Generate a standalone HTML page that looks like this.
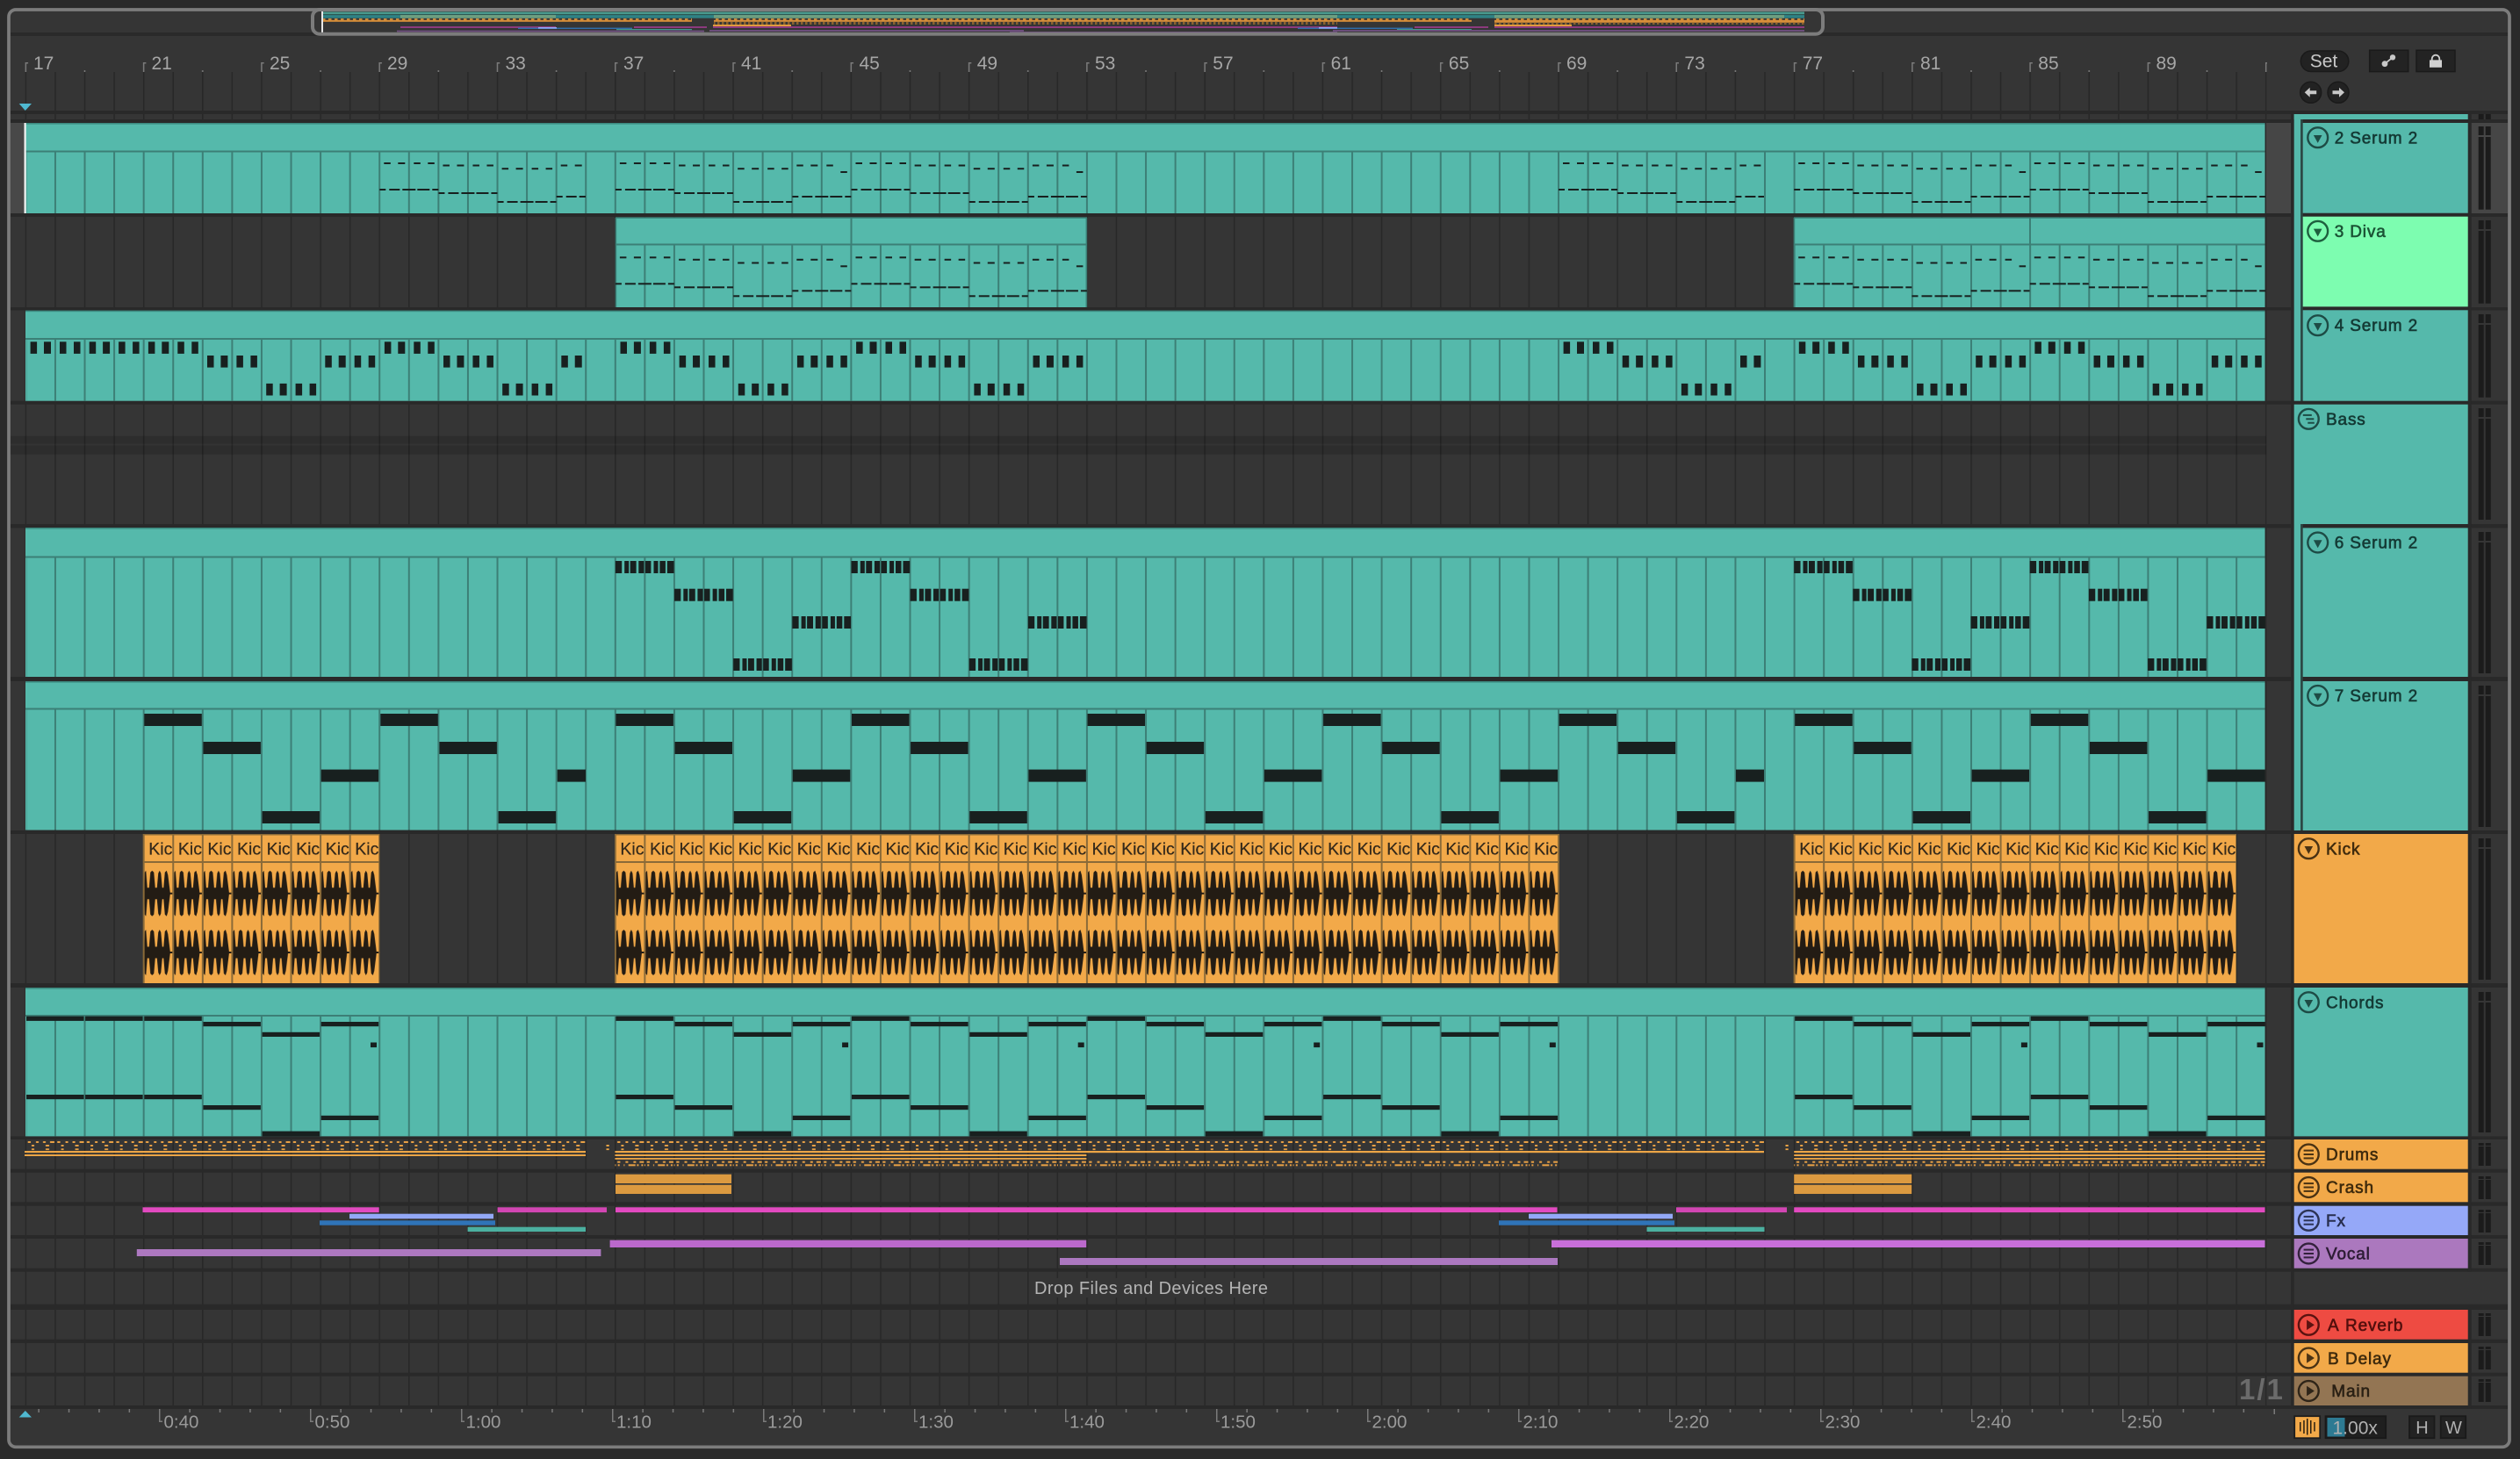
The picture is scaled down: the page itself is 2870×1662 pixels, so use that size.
<!DOCTYPE html>
<html><head><meta charset="utf-8"><title>Arrangement</title>
<style>
html,body{margin:0;padding:0;background:#2a2a2a;overflow:hidden}
svg{display:block}
text{font-family:"Liberation Sans",sans-serif}
.r{font-size:21px;fill:#a6a6a6}
.b{font-size:20.5px;fill:#9a9a9a}
.t{font-size:19px;letter-spacing:.85px;stroke-width:.6px}
.k{font-size:19.5px;fill:#33281a;stroke:#33281a;stroke-width:.2px}
</style></head><body>
<svg xmlns="http://www.w3.org/2000/svg" width="2870" height="1662" viewBox="0 0 2870 1662">
<defs>
<pattern id="pg" patternUnits="userSpaceOnUse" width="33.57" height="10" patternTransform="translate(28.6,0)"><rect width="1.6" height="10" fill="#282828"/></pattern>
<pattern id="pl" patternUnits="userSpaceOnUse" width="33.57" height="10" patternTransform="translate(28.4,0)"><rect width="2" height="10" fill="#3c7f76"/></pattern>
<pattern id="ps" patternUnits="userSpaceOnUse" width="33.57" height="10" patternTransform="translate(28.4,0)"><rect width="2" height="10" fill="#8a6a38"/></pattern>
<pattern id="pt" patternUnits="userSpaceOnUse" width="134.28" height="11" patternTransform="translate(28.6,71)"><rect width="1.5" height="11" fill="#7a7a7a"/><rect width="3.5" height="1.5" fill="#7a7a7a"/><rect x="67.14" y="9" width="1.5" height="2" fill="#7a7a7a"/></pattern>
<pattern id="pb" patternUnits="userSpaceOnUse" width="34.4" height="4" patternTransform="translate(43.4,1605)"><rect width="1.5" height="4" fill="#7a7a7a"/></pattern>
<pattern id="pm" patternUnits="userSpaceOnUse" width="172" height="15" patternTransform="translate(181,1605)"><rect width="1.5" height="15" fill="#7a7a7a"/><rect y="13.5" width="4" height="1.5" fill="#7a7a7a"/></pattern>
<path id="w" d="M.8-6.5 1.5-24 3-26 4.5-6.5H6.5L8-24 10-26 12-24 13.5-6.5H15.5L17-23 18.5-26 20-23 21.5-6.5H23L24.5-24 26.5-26 28-21 30-5 30.5-1H33.5V1H30.5L30 5 28 21 26.5 26 24.5 24 23 6.5H21.5L20 23 18.5 26 17 23 15.5 6.5H13.5L12 24 10 26 8 24 6.5 6.5H4.5L3 26 1.5 24 .8 6.5Z"/>
<pattern id="pk" patternUnits="userSpaceOnUse" width="33.57" height="170" patternTransform="translate(29,950)"><use href="#w" y="67.7" fill="#231c14"/><use href="#w" y="135" fill="#231c14"/></pattern>
<pattern id="pd1" patternUnits="userSpaceOnUse" width="33.57" height="14" patternTransform="translate(29,1298)"><g fill="#e8a045"><rect x="2.7" y="2" width="3.3" height="2"/><rect x="12" y="2" width="3" height="2"/><rect x="20" y="2" width="3" height="2"/><rect x="28" y="2" width="5" height="2"/><rect x="7" y="6" width="3" height="2"/><rect x="23" y="6" width="4" height="2"/><rect x="7" y="10.3" width="3" height="1.8"/><rect x="23" y="10.3" width="4" height="1.8"/></g></pattern>
<pattern id="pd2" patternUnits="userSpaceOnUse" width="33.57" height="8" patternTransform="translate(29,1322)"><g fill="#e8a045"><rect x="2.7" y=".7" width="3.3" height="2"/><rect x="12" y=".7" width="3" height="2"/><rect x="21" y=".7" width="3" height="2"/><rect x="28" y=".7" width="5" height="2"/><rect x="0" y="4.3" width="1" height="2"/><rect x="3.3" y="4.3" width="2" height="2"/><rect x="10" y="4.3" width="1" height="2"/><rect x="15.3" y="4.3" width="8" height="2"/><rect x="25" y="4.3" width="2" height="2"/><rect x="30" y="4.3" width="2" height="2"/></g></pattern>
<pattern id="po" patternUnits="userSpaceOnUse" width="7" height="2" patternTransform="translate(367,21)"><rect width="3.5" height="2" fill="#c98a3c"/></pattern>
<pattern id="po2" patternUnits="userSpaceOnUse" width="5" height="3" patternTransform="translate(367,25)"><rect width="2.5" height="3" fill="#8a6230"/></pattern>

<g id="d1" fill="#18201f"><rect x="5" width="7.5" height="2"/><rect x="21" width="8" height="2"/><rect x="39" width="7.5" height="2"/><rect x="55" width="7.5" height="2"/></g>
<g id="d2" fill="#18201f"><rect width="7" height="2"/><rect x="11" width="12" height="2"/><rect x="26" width="15" height="2"/><rect x="43" width="14" height="2"/><rect x="60" width="7" height="2"/></g>
<g id="t1">
<use href="#d1" y="185"/><use href="#d2" y="215"/>
<use href="#d1" x="67.14" y="187.5"/><use href="#d2" x="67.14" y="219"/>
<use href="#d1" x="134.28" y="191.2"/><use href="#d2" x="134.28" y="229"/>
<g fill="#18201f"><rect x="206.4" y="187.5" width="7.5" height="2"/><rect x="222.4" y="187.5" width="8" height="2"/><rect x="240.4" y="187.5" width="7.5" height="2"/><rect x="256.4" y="195" width="7.5" height="2"/></g><use href="#d2" x="201.42" y="223"/>
</g>
<g id="q" fill="#18201f"><rect x="5.6" width="7.5" height="13.6"/><rect x="21" width="8" height="13.6"/><rect x="39" width="7.5" height="13.6"/><rect x="55" width="7.5" height="13.6"/></g>
<g id="t4"><use href="#q" y="389.3"/><use href="#q" x="67.14" y="405"/><use href="#q" x="134.28" y="436.9"/><use href="#q" x="201.42" y="405"/></g>
<g id="c" fill="#18201f"><rect width="7.3" height="14"/><rect x="10.3" width="5" height="14"/><rect x="16.8" width="6.9" height="14"/><rect x="26.4" width="6.1" height="14"/><rect x="34" width="6.5" height="14"/><rect x="43.6" width="5" height="14"/><rect x="50.5" width="6.5" height="14"/><rect x="59" width="7.7" height="14"/></g>
<g id="t6"><use href="#c" y="639"/><use href="#c" x="67.14" y="670.7"/><use href="#c" x="134.28" y="750"/><use href="#c" x="201.42" y="702"/></g>
<g id="t7" fill="#18201f"><rect x="1" y="813" width="65.5" height="14"/><rect x="68.1" y="845" width="65.5" height="14"/><rect x="135.3" y="924" width="65.5" height="14"/><rect x="202.4" y="876.6" width="65.5" height="14"/></g>
<g id="a" fill="#18201f"><rect x="1" y="1157.7" width="65.5" height="5.2"/><rect x="1" y="1247" width="65.5" height="5.2"/></g>
<g id="t8" fill="#18201f"><use href="#a"/><rect x="68.1" y="1164" width="65.5" height="5.2"/><rect x="68.1" y="1259" width="65.5" height="5.2"/><rect x="135.3" y="1175.8" width="65.5" height="5.2"/><rect x="135.3" y="1288.6" width="65.5" height="5.8"/><rect x="202.4" y="1164" width="65.5" height="5.2"/><rect x="202.4" y="1270.8" width="65.5" height="5.2"/><rect x="258.7" y="1187.5" width="7" height="5.6"/></g>

<g id="id"><circle r="11.4" fill="none" stroke="currentColor" stroke-width="2.4"/><polygon points="-4.8,-2.7 4.8,-2.7 0,6.2" fill="currentColor" stroke="none"/></g>
<g id="il"><circle r="11.4" fill="none" stroke="currentColor" stroke-width="2.4"/><g fill="currentColor" stroke="none"><rect x="-5.7" y="-5.4" width="11.4" height="2"/><rect x="-5.7" y="-1" width="11.4" height="2"/><rect x="-5.7" y="3.4" width="11.4" height="2"/></g></g>
<g id="ib"><circle r="11.4" fill="none" stroke="currentColor" stroke-width="2.4"/><g fill="currentColor" stroke="none"><rect x="-6.5" y="-5.4" width="10" height="2"/><rect x="-3" y="-1" width="9" height="2"/><rect x="-1" y="3.4" width="7.5" height="2"/></g></g>
<g id="ip"><circle r="11.4" fill="none" stroke="currentColor" stroke-width="2.4"/><polygon points="-2.2,-5.8 6.6,0 -2.2,5.8" fill="currentColor" stroke="none"/></g>
<clipPath id="c36"><rect x="0" y="0" width="667" height="1662"/></clipPath>
<clipPath id="c76"><rect x="1700" y="0" width="309" height="1662"/></clipPath>
<g id="mb" fill="#1b1b1b"><rect x="2822.7" width="6" height="6"/><rect x="2830.7" width="6" height="6"/></g>
</defs>

<!-- backdrop -->
<rect width="2870" height="1662" fill="#2a2a2a"/>
<rect x="10" y="11" width="2848" height="1637" rx="8" fill="#353535"/>

<!-- overview strip -->
<rect x="12" y="37" width="2846" height="4" fill="#2a2a2a"/>
<rect x="358" y="13" width="1716" height="26" fill="#353535"/>
<g>
<rect x="367" y="13.5" width="1688" height="2.6" fill="#4a9a8e"/>
<rect x="367" y="16.1" width="1688" height="1" fill="#2c5a55"/>
<rect x="367" y="17.1" width="1688" height="3.6" fill="#2f8284"/>
<rect x="456" y="17.1" width="177" height="3.6" fill="#6e9f80"/>
<rect x="813" y="17.1" width="710" height="3.6" fill="#6e9f80"/>
<rect x="1702" y="17.1" width="330" height="3.6" fill="#6e9f80"/>
<rect x="367" y="21" width="421" height="2" fill="url(#po)"/>
<rect x="813" y="21" width="863" height="2" fill="url(#po)"/>
<rect x="1702" y="21" width="353" height="2" fill="url(#po)"/>
<rect x="367" y="22.8" width="421" height="2" fill="#d98f39"/>
<rect x="813" y="22.8" width="863" height="2" fill="#d98f39"/>
<rect x="1702" y="22.8" width="353" height="3" fill="#d98f39"/>
<rect x="813" y="25" width="710" height="3" fill="url(#po2)"/>
<rect x="1702" y="25.6" width="353" height="2.4" fill="url(#po2)"/>
<rect x="812" y="28" width="89" height="2" fill="#e09a3f"/>
<rect x="1702" y="28" width="88" height="2" fill="#e09a3f"/>
<g fill="#8c3a7e"><rect x="456" y="30" width="177" height="2"/><rect x="722" y="30" width="83" height="2"/><rect x="812" y="30" width="711" height="2"/><rect x="1611" y="30" width="84" height="2"/><rect x="1702" y="30" width="353" height="2"/></g>
<rect x="590" y="31.6" width="130" height="1.3" fill="#2f74b8"/><rect x="613" y="31" width="21" height="1.6" fill="#93a8f7"/>
<rect x="1478" y="31.6" width="131" height="1.3" fill="#2f74b8"/><rect x="1502" y="31" width="21" height="1.6" fill="#93a8f7"/>
<rect x="702" y="33" width="86" height="1.2" fill="#3f9a8e"/><rect x="1591" y="33" width="85" height="1.2" fill="#3f9a8e"/>
<g fill="#6f4f80"><rect x="452" y="34.6" width="350" height="1.8"/><rect x="808" y="34" width="358" height="1.8"/><rect x="1150" y="36" width="373" height="1"/><rect x="1518" y="34" width="537" height="1.8"/></g>
<rect x="366" y="13" width="2" height="24" fill="#e8e8e8"/>
</g>
<rect x="356" y="11" width="1720" height="27.7" rx="8" fill="none" stroke="#7c7c7c" stroke-width="4"/>

<!-- grid -->
<rect x="12" y="82" width="2569.5" height="1519" fill="url(#pg)"/>
<rect x="12" y="140" width="16" height="103" fill="#484848"/>
<rect x="2581" y="140" width="28" height="103" fill="#464646"/>
<rect x="2814.7" y="140" width="41.5" height="103" fill="#464646"/>
<rect x="12" y="496.6" width="2569" height="21" fill="#000" fill-opacity=".14"/>
<rect x="12" y="505.5" width="2569" height="2" fill="#fff" fill-opacity=".03"/>

<!-- gap strips -->
<g fill="#292929">
<rect x="12" y="126" width="2844" height="4"/><rect x="12" y="136" width="2844" height="4"/><rect x="12" y="243" width="2844" height="4"/><rect x="12" y="350" width="2844" height="3.6"/><rect x="12" y="456.7" width="2844" height="4"/><rect x="12" y="597" width="2844" height="4.4"/><rect x="12" y="771" width="2844" height="5"/><rect x="12" y="946" width="2844" height="4"/><rect x="12" y="1120" width="2844" height="5"/><rect x="12" y="1294.4" width="2844" height="3.6"/><rect x="12" y="1331.7" width="2844" height="4"/><rect x="12" y="1369.3" width="2844" height="4.4"/><rect x="12" y="1407" width="2844" height="4"/><rect x="12" y="1444.7" width="2844" height="4"/><rect x="12" y="1485.7" width="2844" height="6.3"/><rect x="12" y="1525.7" width="2844" height="4.3"/><rect x="12" y="1563.7" width="2844" height="4"/><rect x="12" y="1601" width="2844" height="4"/>
<rect x="2609" y="130" width="3.7" height="1475"/>
<rect x="2810.7" y="130" width="4" height="1318.7"/><rect x="2810.7" y="1492" width="4" height="113"/>
</g>

<!-- ruler -->
<rect x="28" y="71" width="2554" height="11" fill="url(#pt)"/>
<g>
<text class="r" x="38" y="79">17</text><text class="r" x="172.5" y="79">21</text><text class="r" x="307" y="79">25</text><text class="r" x="441" y="79">29</text><text class="r" x="575.5" y="79">33</text><text class="r" x="710" y="79">37</text><text class="r" x="844" y="79">41</text><text class="r" x="978.5" y="79">45</text><text class="r" x="1112.7" y="79">49</text><text class="r" x="1247" y="79">53</text><text class="r" x="1381.3" y="79">57</text><text class="r" x="1515.6" y="79">61</text><text class="r" x="1649.9" y="79">65</text><text class="r" x="1784" y="79">69</text><text class="r" x="1918.4" y="79">73</text><text class="r" x="2052.7" y="79">77</text><text class="r" x="2187" y="79">81</text><text class="r" x="2321.3" y="79">85</text><text class="r" x="2455.5" y="79">89</text>
</g>
<polygon points="21.7,118 36,118 28.8,126" fill="#4fb8d0"/>

<!-- teal clips -->
<g fill="#55b9ab">
<rect x="29" y="140" width="2550.5" height="103"/>
<rect x="701" y="248" width="537" height="102"/><rect x="2043" y="248" width="536.5" height="102"/>
<rect x="29" y="354" width="2550.5" height="102.7"/>
<rect x="29" y="601.4" width="2550.5" height="169.6"/>
<rect x="29" y="776.5" width="2550.5" height="169"/>
<rect x="29" y="1125" width="2550.5" height="169.4"/>
</g>
<g fill="#3c8a80">
<rect x="29" y="140" width="2550.5" height="1.6"/><rect x="701" y="247.4" width="537" height="1.6"/><rect x="2043" y="247.4" width="536.5" height="1.6"/><rect x="29" y="353.6" width="2550.5" height="1.6"/><rect x="29" y="601" width="2550.5" height="1.6"/><rect x="29" y="776" width="2550.5" height="1.6"/><rect x="29" y="1125" width="2550.5" height="1.6"/>
</g>
<g fill="#3c7f76">
<rect x="29" y="171.5" width="2550.5" height="2"/>
<rect x="701" y="277.5" width="537" height="2"/><rect x="2043" y="277.5" width="536.5" height="2"/>
<rect x="29" y="385" width="2550.5" height="2"/>
<rect x="29" y="633.5" width="2550.5" height="2"/>
<rect x="29" y="806.5" width="2550.5" height="2"/>
<rect x="29" y="1156" width="2550.5" height="2"/>
<rect x="968.5" y="248" width="2" height="30"/><rect x="2311" y="248" width="2" height="30"/>
<rect x="700.6" y="248" width="1.6" height="102"/><rect x="1236.6" y="248" width="1.6" height="102"/><rect x="2042.6" y="248" width="1.6" height="102"/>
</g>
<rect x="30" y="173.5" width="2549.5" height="69.5" fill="url(#pl)"/>
<rect x="701" y="279.5" width="537" height="70.5" fill="url(#pl)"/><rect x="2043" y="279.5" width="536.5" height="70.5" fill="url(#pl)"/>
<rect x="30" y="387" width="2549.5" height="69.7" fill="url(#pl)"/>
<rect x="30" y="635.5" width="2549.5" height="135.5" fill="url(#pl)"/>
<rect x="30" y="808.5" width="2549.5" height="137" fill="url(#pl)"/>
<rect x="30" y="1158" width="2549.5" height="136.4" fill="url(#pl)"/>
<rect x="27.5" y="140" width="2.2" height="103" fill="#f2f2f2"/>

<!-- track 2 notes -->
<g clip-path="url(#c36)"><use href="#t1" x="432.3"/></g>
<use href="#t1" x="700.9"/><use href="#t1" x="969.5"/>
<g clip-path="url(#c76)"><use href="#t1" x="1775"/></g>
<use href="#t1" x="2043.2"/><use href="#t1" x="2311.8"/>
<!-- diva -->
<g transform="translate(0,107.3)"><use href="#t1" x="700.9"/><use href="#t1" x="969.5"/><use href="#t1" x="2043.2"/><use href="#t1" x="2311.8"/></g>
<!-- track 4 -->
<use href="#q" x="29" y="389.3"/><use href="#q" x="96.1" y="389.3"/><use href="#q" x="163.3" y="389.3"/><use href="#q" x="230.4" y="405"/><use href="#q" x="297.6" y="436.9"/><use href="#q" x="364.7" y="405"/>
<g clip-path="url(#c36)"><use href="#t4" x="432.3"/></g>
<use href="#t4" x="700.9"/><use href="#t4" x="969.5"/>
<g clip-path="url(#c76)"><use href="#t4" x="1775"/></g>
<use href="#t4" x="2043.2"/><use href="#t4" x="2311.8"/>
<!-- track 6 -->
<use href="#t6" x="700.9"/><use href="#t6" x="969.5"/><use href="#t6" x="2043.2"/><use href="#t6" x="2311.8"/>
<!-- track 7 -->
<use href="#t7" x="163.3"/><g clip-path="url(#c36)"><use href="#t7" x="432.3"/></g>
<use href="#t7" x="700.4"/><use href="#t7" x="969"/><use href="#t7" x="1237.5"/><use href="#t7" x="1506.1"/>
<g clip-path="url(#c76)"><use href="#t7" x="1774.6"/></g>
<use href="#t7" x="2043.2"/><use href="#t7" x="2311.8"/>
<!-- chords -->
<use href="#a" x="29"/><use href="#a" x="96.1"/>
<use href="#t8" x="163.3"/>
<use href="#t8" x="700.4"/><use href="#t8" x="969"/><use href="#t8" x="1237.5"/><use href="#t8" x="1506.1"/>
<use href="#t8" x="2043.2"/><use href="#t8" x="2311.8"/>

<!-- kick -->
<g fill="#f2a949"><rect x="163.3" y="950" width="268.5" height="170"/><rect x="701" y="950" width="1074" height="170"/><rect x="2043.2" y="950" width="503.5" height="170"/></g>
<g fill="url(#pk)"><rect x="163.3" y="950" width="268.5" height="170"/><rect x="701" y="950" width="1074" height="170"/><rect x="2043.2" y="950" width="503.5" height="170"/></g>
<g fill="url(#ps)"><rect x="162.5" y="950" width="270" height="170"/><rect x="700" y="950" width="1076" height="170"/><rect x="2042" y="950" width="505" height="170"/></g>
<g fill="#8a6a38"><rect x="163.3" y="981" width="268.5" height="2"/><rect x="701" y="981" width="1074" height="2"/><rect x="2043.2" y="981" width="503.5" height="2"/><rect x="163.3" y="950" width="268.5" height="1.5"/><rect x="701" y="950" width="1074" height="1.5"/><rect x="2043.2" y="950" width="503.5" height="1.5"/></g>
<g>
<text class="k" x="169.3" y="973.3">Kic</text><text class="k" x="202.9" y="973.3">Kic</text><text class="k" x="236.4" y="973.3">Kic</text><text class="k" x="270" y="973.3">Kic</text><text class="k" x="303.6" y="973.3">Kic</text><text class="k" x="337.1" y="973.3">Kic</text><text class="k" x="370.7" y="973.3">Kic</text><text class="k" x="404.3" y="973.3">Kic</text>
<text class="k" x="706.4" y="973.3">Kic</text><text class="k" x="740" y="973.3">Kic</text><text class="k" x="773.5" y="973.3">Kic</text><text class="k" x="807.1" y="973.3">Kic</text><text class="k" x="840.7" y="973.3">Kic</text><text class="k" x="874.2" y="973.3">Kic</text><text class="k" x="907.8" y="973.3">Kic</text><text class="k" x="941.4" y="973.3">Kic</text><text class="k" x="975" y="973.3">Kic</text><text class="k" x="1008.5" y="973.3">Kic</text><text class="k" x="1042.1" y="973.3">Kic</text><text class="k" x="1075.7" y="973.3">Kic</text><text class="k" x="1109.2" y="973.3">Kic</text><text class="k" x="1142.8" y="973.3">Kic</text><text class="k" x="1176.4" y="973.3">Kic</text><text class="k" x="1210" y="973.3">Kic</text><text class="k" x="1243.5" y="973.3">Kic</text><text class="k" x="1277.1" y="973.3">Kic</text><text class="k" x="1310.7" y="973.3">Kic</text><text class="k" x="1344.2" y="973.3">Kic</text><text class="k" x="1377.8" y="973.3">Kic</text><text class="k" x="1411.4" y="973.3">Kic</text><text class="k" x="1444.9" y="973.3">Kic</text><text class="k" x="1478.5" y="973.3">Kic</text><text class="k" x="1512.1" y="973.3">Kic</text><text class="k" x="1545.7" y="973.3">Kic</text><text class="k" x="1579.2" y="973.3">Kic</text><text class="k" x="1612.8" y="973.3">Kic</text><text class="k" x="1646.4" y="973.3">Kic</text><text class="k" x="1679.9" y="973.3">Kic</text><text class="k" x="1713.5" y="973.3">Kic</text><text class="k" x="1747.1" y="973.3">Kic</text>
<text class="k" x="2049.2" y="973.3">Kic</text><text class="k" x="2082.8" y="973.3">Kic</text><text class="k" x="2116.3" y="973.3">Kic</text><text class="k" x="2149.9" y="973.3">Kic</text><text class="k" x="2183.5" y="973.3">Kic</text><text class="k" x="2217.1" y="973.3">Kic</text><text class="k" x="2250.6" y="973.3">Kic</text><text class="k" x="2284.2" y="973.3">Kic</text><text class="k" x="2317.8" y="973.3">Kic</text><text class="k" x="2351.3" y="973.3">Kic</text><text class="k" x="2384.9" y="973.3">Kic</text><text class="k" x="2418.5" y="973.3">Kic</text><text class="k" x="2452" y="973.3">Kic</text><text class="k" x="2485.6" y="973.3">Kic</text><text class="k" x="2519.2" y="973.3">Kic</text>
</g>

<!-- drums -->
<g>
<rect x="29" y="1298" width="638" height="14" fill="url(#pd1)"/>
<rect x="700.4" y="1298" width="1308.6" height="14" fill="url(#pd1)"/>
<rect x="2043.2" y="1298" width="536.3" height="14" fill="url(#pd1)"/>
<rect x="700.4" y="1322" width="1074.2" height="8" fill="url(#pd2)"/>
<rect x="2043.2" y="1322" width="536.3" height="8" fill="url(#pd2)"/>
<g fill="#eca546">
<rect x="28" y="1311" width="639" height="2.2"/><rect x="28" y="1315" width="639" height="2"/>
<rect x="700.4" y="1311" width="1308.6" height="2.2"/><rect x="700.4" y="1315" width="537" height="2"/><rect x="700.4" y="1319" width="537" height="1.8"/>
<rect x="2043.2" y="1311" width="536.3" height="2.2"/><rect x="2043.2" y="1315" width="536.3" height="2"/><rect x="2043.2" y="1319" width="536.3" height="1.8"/>
<rect x="690.5" y="1304" width="3.2" height="2"/><rect x="690.5" y="1308.3" width="3.2" height="1.8"/><rect x="2033.5" y="1304" width="3.2" height="2"/><rect x="2033.5" y="1308.3" width="3.2" height="1.8"/>
</g>
</g>
<!-- crash -->
<g fill="#dc9a40"><rect x="701" y="1337.7" width="132" height="10.3"/><rect x="701" y="1349.7" width="132" height="10.3"/><rect x="2043.2" y="1337.7" width="134" height="10.3"/><rect x="2043.2" y="1349.7" width="134" height="10.3"/></g>
<!-- fx -->
<g fill="#e24ac0"><rect x="162.5" y="1375.3" width="269.2" height="5.8"/><rect x="566.6" y="1375.3" width="124.4" height="5.8" fill="#d246b3"/><rect x="701" y="1375.3" width="1072.5" height="5.8"/><rect x="1909" y="1375.3" width="126" height="5.8" fill="#d246b3"/><rect x="2043.2" y="1375.3" width="536.3" height="5.8"/></g>
<rect x="398" y="1382.7" width="164" height="5.6" fill="#93a8f7"/><rect x="1741" y="1382.7" width="164" height="5.6" fill="#93a8f7"/>
<rect x="364" y="1390.3" width="200" height="5.4" fill="#2f74b8"/><rect x="1707" y="1390.3" width="200" height="5.4" fill="#2f74b8"/>
<rect x="532.6" y="1397.7" width="134.4" height="5.3" fill="#4bb0a0"/><rect x="1875.5" y="1397.7" width="134" height="5.3" fill="#4bb0a0"/>
<!-- vocal -->
<rect x="155.8" y="1423" width="528.6" height="8" fill="#ad78c0"/>
<rect x="1207" y="1433" width="567" height="8" fill="#ac78c0"/>
<rect x="694.6" y="1412.7" width="542.6" height="8.3" fill="#bb69cc"/>
<rect x="1767" y="1412.7" width="812.5" height="8.3" fill="#c86fda"/>
<!-- drop text -->
<rect x="1176" y="1456" width="270" height="22" fill="#353535"/>
<text x="1178" y="1474" font-size="20" fill="#b4b4b4" textLength="266">Drop Files and Devices Here</text>

<!-- headers -->
<g>
<rect x="2612.7" y="130" width="198" height="6" fill="#55b9ab"/>
<rect x="2612.7" y="130" width="7.5" height="326.7" fill="#55b9ab"/>
<rect x="2620.2" y="136" width="2.5" height="320.7" fill="#2b4643"/>
<rect x="2622.7" y="140" width="188" height="102.7" fill="#55b9ab"/>
<rect x="2622.7" y="246.7" width="188" height="102.6" fill="#7dfdb0"/>
<rect x="2622.7" y="353.3" width="188" height="103.4" fill="#55b9ab"/>
<rect x="2612.7" y="460.7" width="198" height="136.3" fill="#55b9ab"/>
<rect x="2612.7" y="597" width="7.5" height="349" fill="#55b9ab"/>
<rect x="2620.2" y="597" width="2.5" height="349" fill="#2b4643"/>
<rect x="2622.7" y="601.4" width="188" height="169.6" fill="#55b9ab"/>
<rect x="2622.7" y="776" width="188" height="170" fill="#55b9ab"/>
<rect x="2612.7" y="950" width="198" height="170" fill="#f2a949"/>
<rect x="2612.7" y="1125" width="198" height="169.4" fill="#55b9ab"/>
<rect x="2612.7" y="1298" width="198" height="33.7" fill="#f2a949"/>
<rect x="2612.7" y="1335.7" width="198" height="33.6" fill="#f2a949"/>
<rect x="2612.7" y="1373.7" width="198" height="33.3" fill="#95a8f8"/>
<rect x="2612.7" y="1411" width="198" height="33.7" fill="#ab78be"/>
<rect x="2612.7" y="1492" width="198" height="33.7" fill="#ee4b42"/>
<rect x="2612.7" y="1530" width="198" height="33.7" fill="#f2a949"/>
<rect x="2612.7" y="1567.7" width="198" height="33.3" fill="#937553"/>
</g>
<g color="#1d4b45" fill="#143a35" stroke="#143a35">
<use href="#id" x="2639.7" y="156.7"/><text class="t" x="2658.7" y="163.3">2 Serum 2</text>
<use href="#id" x="2639.7" y="370.7"/><text class="t" x="2658.7" y="377">4 Serum 2</text>
<use href="#ib" x="2629.3" y="477.3"/><text class="t" x="2649" y="484">Bass</text>
<use href="#id" x="2639.7" y="618"/><text class="t" x="2658.7" y="624.7">6 Serum 2</text>
<use href="#id" x="2639.7" y="792.5"/><text class="t" x="2658.7" y="799.2">7 Serum 2</text>
<use href="#id" x="2629.3" y="1141.7"/><text class="t" x="2649" y="1148.4">Chords</text>
</g>
<g color="#1e5f3e" fill="#1b5335" stroke="#1b5335"><use href="#id" x="2639.7" y="263.3"/><text class="t" x="2658.7" y="270">3 Diva</text></g>
<g color="#4a3213" fill="#3f2b0d" stroke="#3f2b0d">
<use href="#id" x="2629.3" y="966.7"/><text class="t" x="2649" y="973.4">Kick</text>
<use href="#il" x="2629.3" y="1315"/><text class="t" x="2649" y="1321.7">Drums</text>
<use href="#il" x="2629.3" y="1352.5"/><text class="t" x="2649" y="1359.2">Crash</text>
<use href="#ip" x="2629.3" y="1547"/><text class="t" x="2651" y="1554">B</text><text class="t" x="2671" y="1554">Delay</text>
</g>
<g color="#2c3355" fill="#282e4e" stroke="#282e4e"><use href="#il" x="2629.3" y="1390.3"/><text class="t" x="2649" y="1397">Fx</text></g>
<g color="#33213c" fill="#2e1d36" stroke="#2e1d36"><use href="#il" x="2629.3" y="1428"/><text class="t" x="2649" y="1434.7">Vocal</text></g>
<g color="#5b1210" fill="#530f0d" stroke="#530f0d"><use href="#ip" x="2629.3" y="1509.3"/><text class="t" x="2651" y="1516">A</text><text class="t" x="2671" y="1516">Reverb</text></g>
<g color="#2e2418" fill="#2a2014" stroke="#2a2014"><use href="#ip" x="2629.3" y="1584.5"/><text class="t" x="2655.3" y="1591">Main</text></g>

<!-- meters -->
<use href="#mb" y="130"/>
<g fill="#1b1b1b">
<rect x="2822.7" y="144" width="6" height="10"/><rect x="2830.7" y="144" width="6" height="10"/><rect x="2822.7" y="156" width="6" height="82.7"/><rect x="2830.7" y="156" width="6" height="82.7"/>
<rect x="2822.7" y="251" width="6" height="10"/><rect x="2830.7" y="251" width="6" height="10"/><rect x="2822.7" y="263" width="6" height="82.7"/><rect x="2830.7" y="263" width="6" height="82.7"/>
<rect x="2822.7" y="358" width="6" height="10"/><rect x="2830.7" y="358" width="6" height="10"/><rect x="2822.7" y="370" width="6" height="82.7"/><rect x="2830.7" y="370" width="6" height="82.7"/>
<rect x="2822.7" y="465" width="6" height="10"/><rect x="2830.7" y="465" width="6" height="10"/><rect x="2822.7" y="477" width="6" height="115"/><rect x="2830.7" y="477" width="6" height="115"/>
<rect x="2822.7" y="606" width="6" height="10"/><rect x="2830.7" y="606" width="6" height="10"/><rect x="2822.7" y="618" width="6" height="149"/><rect x="2830.7" y="618" width="6" height="149"/>
<rect x="2822.7" y="781" width="6" height="10"/><rect x="2830.7" y="781" width="6" height="10"/><rect x="2822.7" y="793" width="6" height="149"/><rect x="2830.7" y="793" width="6" height="149"/>
<rect x="2822.7" y="955" width="6" height="10"/><rect x="2830.7" y="955" width="6" height="10"/><rect x="2822.7" y="967" width="6" height="149"/><rect x="2830.7" y="967" width="6" height="149"/>
<rect x="2822.7" y="1130" width="6" height="10"/><rect x="2830.7" y="1130" width="6" height="10"/><rect x="2822.7" y="1142" width="6" height="148"/><rect x="2830.7" y="1142" width="6" height="148"/>
<rect x="2822.7" y="1302" width="6" height="3"/><rect x="2830.7" y="1302" width="6" height="3"/><rect x="2822.7" y="1306" width="6" height="22"/><rect x="2830.7" y="1306" width="6" height="22"/>
<rect x="2822.7" y="1340" width="6" height="3"/><rect x="2830.7" y="1340" width="6" height="3"/><rect x="2822.7" y="1344" width="6" height="22"/><rect x="2830.7" y="1344" width="6" height="22"/>
<rect x="2822.7" y="1378" width="6" height="3"/><rect x="2830.7" y="1378" width="6" height="3"/><rect x="2822.7" y="1382" width="6" height="22"/><rect x="2830.7" y="1382" width="6" height="22"/>
<rect x="2822.7" y="1415" width="6" height="3"/><rect x="2830.7" y="1415" width="6" height="3"/><rect x="2822.7" y="1419" width="6" height="22"/><rect x="2830.7" y="1419" width="6" height="22"/>
<rect x="2822.7" y="1496" width="6" height="3"/><rect x="2830.7" y="1496" width="6" height="3"/><rect x="2822.7" y="1500" width="6" height="22"/><rect x="2830.7" y="1500" width="6" height="22"/>
<rect x="2822.7" y="1534" width="6" height="3"/><rect x="2830.7" y="1534" width="6" height="3"/><rect x="2822.7" y="1538" width="6" height="22"/><rect x="2830.7" y="1538" width="6" height="22"/>
<rect x="2822.7" y="1571" width="6" height="3"/><rect x="2830.7" y="1571" width="6" height="3"/><rect x="2822.7" y="1575" width="6" height="22"/><rect x="2830.7" y="1575" width="6" height="22"/>
</g>

<!-- top right controls -->
<rect x="2620.3" y="58" width="54.5" height="23.5" rx="11.7" fill="#222" stroke="#1a1a1a" stroke-width="1.5"/>
<text x="2630.7" y="76.5" font-size="21" fill="#c8c8c8">Set</text>
<circle cx="2631.7" cy="105.3" r="12" fill="#222" stroke="#1a1a1a" stroke-width="1.5"/>
<circle cx="2663" cy="105.3" r="12" fill="#222" stroke="#1a1a1a" stroke-width="1.5"/>
<path d="M2624.7 105.3 2630.7 99.8V103.3H2638.2V107.3H2630.7V110.8Z" fill="#c8c8c8"/>
<path d="M2670 105.3 2664 99.8V103.3H2656.5V107.3H2664V110.8Z" fill="#c8c8c8"/>
<rect x="2698.7" y="57.2" width="44" height="24.4" fill="#232323" stroke="#1a1a1a" stroke-width="1.5"/>
<rect x="2752" y="57.2" width="44" height="24.4" fill="#232323" stroke="#1a1a1a" stroke-width="1.5"/>
<path d="M2716 72.7 2725 65.3" stroke="#c8c8c8" stroke-width="1.8"/><circle cx="2716" cy="72.7" r="3.4" fill="#c8c8c8"/><circle cx="2725" cy="65.3" r="3.2" fill="#c8c8c8"/>
<rect x="2767" y="68.4" width="14" height="8.4" fill="#d0d0d0"/><path d="M2769.7 69V67a4.3 4.3 0 0 1 8.6 0v2" fill="none" stroke="#d0d0d0" stroke-width="1.8"/>

<!-- bottom ruler -->
<rect x="40" y="1605" width="2530" height="4" fill="url(#pb)"/>
<rect x="181" y="1605" width="2250" height="15" fill="url(#pm)"/>
<rect x="2589.5" y="1605" width="1.5" height="6" fill="#7a7a7a"/>
<polygon points="21.7,1614.5 36,1614.5 28.8,1607" fill="#4fb8d0"/>
<g>
<text class="b" x="186.5" y="1626.7">0:40</text><text class="b" x="358.5" y="1626.7">0:50</text><text class="b" x="530.5" y="1626.7">1:00</text><text class="b" x="702" y="1626.7">1:10</text><text class="b" x="874" y="1626.7">1:20</text><text class="b" x="1046" y="1626.7">1:30</text><text class="b" x="1218" y="1626.7">1:40</text><text class="b" x="1390" y="1626.7">1:50</text><text class="b" x="1562.5" y="1626.7">2:00</text><text class="b" x="1734.5" y="1626.7">2:10</text><text class="b" x="1906.5" y="1626.7">2:20</text><text class="b" x="2078.5" y="1626.7">2:30</text><text class="b" x="2250.5" y="1626.7">2:40</text><text class="b" x="2422.5" y="1626.7">2:50</text>
</g>
<text x="2550" y="1594" font-size="33" font-weight="bold" letter-spacing="2" fill="#6b6b6b">1/1</text>
<!-- bottom right -->
<rect x="2613.2" y="1613.2" width="29" height="25" fill="#f2a949" stroke="#1d1d1d" stroke-width="1.8"/>
<g fill="#2a1f10"><rect x="2619" y="1620" width="1.5" height="10.5"/><rect x="2623.2" y="1618" width="1.5" height="15"/><rect x="2627" y="1616" width="1.5" height="18.5"/><rect x="2631" y="1618" width="1.5" height="15"/><rect x="2635.2" y="1620" width="1.5" height="10.5"/></g>
<rect x="2648.5" y="1613.2" width="68.7" height="25" fill="#1f1f1f" stroke="#191919" stroke-width="1.8"/>
<rect x="2650.5" y="1615" width="20" height="21.5" fill="#2d7a92"/>
<text x="2656.5" y="1633.3" font-size="21" fill="#b0b0b0">1.00x</text>
<rect x="2744" y="1613.2" width="28.5" height="25" fill="#232323" stroke="#1a1a1a" stroke-width="1.8"/>
<rect x="2779.7" y="1613.2" width="28.5" height="25" fill="#232323" stroke="#1a1a1a" stroke-width="1.8"/>
<text x="2751.3" y="1633" font-size="20" fill="#b0b0b0">H</text>
<text x="2785" y="1633" font-size="20" fill="#b0b0b0">W</text>

<!-- frame -->
<rect x="10" y="11" width="2848" height="1637.3" rx="8" fill="none" stroke="#7c7c7c" stroke-width="3.7"/>
</svg>
</body></html>
